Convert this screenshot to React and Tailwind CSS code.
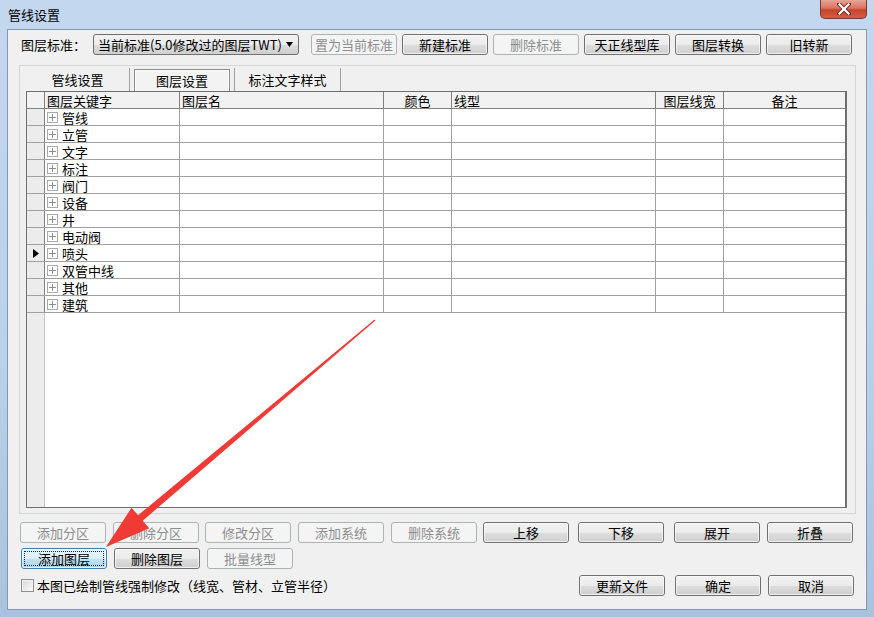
import React from 'react';

function Btn({ children, kind = 'normal', className = '' }) {
  let cls;
  if (kind === 'disabled') cls = 'border-[#adb2b5] bg-[#f4f4f4] text-[#8d8d8d]';
  else if (kind === 'focus') cls = 'border-[#3c7fb1] bg-[linear-gradient(to_bottom,#e8f5fc_0%,#dbeffa_50%,#c3e2f4_51%,#aed5ec_100%)] text-black';
  else cls = 'border-[#707070] bg-[linear-gradient(to_bottom,#f2f2f2_0%,#ebebeb_50%,#dddddd_51%,#cfcfcf_100%)] text-black';
  return (
    <div className={`relative h-[21px] w-[86px] shrink-0 rounded-[3px] border ${cls} flex items-center justify-center text-[13px] leading-none ${className}`}>
      {kind !== 'disabled' && <div className="pointer-events-none absolute inset-0 rounded-[2px] border border-[#fbfbfb]/70" />}
      {kind === 'focus' && <div className="pointer-events-none absolute inset-[2px] border border-dotted border-[#222]" />}
      <span className="relative">{children}</span>
    </div>
  );
}

function PlusBox() {
  return (
    <div className="relative ml-[2px] h-[11px] w-[11px] shrink-0 border border-[#a9a9a9] bg-white">
      <div className="absolute left-[1px] right-[1px] top-[4px] h-[1px] bg-[#8f8f8f]" />
      <div className="absolute top-[1px] bottom-[1px] left-[4px] w-[1px] bg-[#8f8f8f]" />
    </div>
  );
}

const rows = ['管线', '立管', '文字', '标注', '阀门', '设备', '井', '电动阀', '喷头', '双管中线', '其他', '建筑'];

export default function App() {
  return (
    <div className="relative h-[617px] w-[874px] overflow-hidden bg-[linear-gradient(to_bottom,#c3d8ef_0%,#b9d0ea_60%,#a9c2df_100%)] font-['Noto_Sans_CJK_SC','Noto_Sans',sans-serif] text-[13px] text-black">
      {/* title bar */}
      <div className="relative flex h-[29px] items-center pl-[8px]">
        <span className="text-[13px] leading-none text-black">管线设置</span>
        <div className="absolute right-[7px] top-0 flex h-[19px] w-[47px] items-center justify-center rounded-b-[5px] border border-t-0 border-[#7a3a30] bg-[linear-gradient(to_bottom,#e8a597_0%,#d9735f_45%,#c7432c_55%,#d65b42_100%)]">
          <svg width="14" height="12" viewBox="0 0 14 12">
            <path d="M2 1 L12 11 M12 1 L2 11" stroke="#6b2a22" strokeWidth="4" strokeLinecap="square" />
            <path d="M2.5 1.5 L11.5 10.5 M11.5 1.5 L2.5 10.5" stroke="#ffffff" strokeWidth="2.2" strokeLinecap="square" />
          </svg>
        </div>
      </div>

      {/* client */}
      <div className="ml-[7px] flex h-[581px] w-[860px] flex-col border border-[#8498b0] bg-[#f0f0f0]">
        {/* top row */}
        <div className="mt-[4px] flex h-[21px] items-center">
          <span className="ml-[13px] w-[72px] shrink-0 leading-none">图层标准：</span>
          <div className="relative flex h-[21px] w-[206px] shrink-0 items-center rounded-[3px] border border-[#707070] bg-[linear-gradient(to_bottom,#f2f2f2_0%,#ebebeb_50%,#dddddd_51%,#cfcfcf_100%)] pl-[4px] leading-none">
            <span>当前标准(5.0修改过的图层TWT)</span>
            <svg className="absolute right-[5px] top-[7px]" width="7" height="5" viewBox="0 0 7 5">
              <polygon points="0,0 7,0 3.5,5" fill="#000" />
            </svg>
          </div>
          <Btn kind="disabled" className="ml-[12px]">置为当前标准</Btn>
          <Btn className="ml-[5px]">新建标准</Btn>
          <Btn kind="disabled" className="ml-[5px]">删除标准</Btn>
          <Btn className="ml-[5px]">天正线型库</Btn>
          <Btn className="ml-[5px]">图层转换</Btn>
          <Btn className="ml-[5px]">旧转新</Btn>
        </div>

        {/* tab panel */}
        <div className="ml-[11px] mt-[10px] flex h-[449px] w-[837px] flex-col border border-[#d5d5d5] pl-[6px]">
          <div className="mt-[2px] flex h-[23px] items-stretch">
            <div className="flex w-[104px] items-center justify-center border-r border-[#a0a0a0] leading-none">管线设置</div>
            <div className="ml-[4px] mt-[1px] flex w-[96px] items-center justify-center border border-b-0 border-[#8c8c8c] bg-[#f3f3f3] leading-none shadow-[inset_1px_1px_0_#ffffff,inset_-1px_0_0_#ffffff]">图层设置</div>
            <div className="ml-[4px] flex w-[107px] items-center justify-center border-l border-r border-[#a0a0a0] leading-none">标注文字样式</div>
          </div>

          {/* grid */}
          <div className="flex h-[417px] w-[821px] flex-col border border-r-2 border-[#6e6e6e] bg-white">
            <div className="flex h-[17px] shrink-0 border-b border-[#808080] bg-[#f2f2f2] leading-none">
              <div className="w-[18px] shrink-0 border-r border-[#808080]" />
              <div className="flex w-[135px] shrink-0 items-center border-r border-[#808080] pl-[2px]">图层关键字</div>
              <div className="flex w-[204px] shrink-0 items-center border-r border-[#808080] pl-[2px]">图层名</div>
              <div className="flex w-[68px] shrink-0 items-center justify-center border-r border-[#808080]">颜色</div>
              <div className="flex w-[204px] shrink-0 items-center border-r border-[#808080] pl-[2px]">线型</div>
              <div className="flex w-[68px] shrink-0 items-center justify-center border-r border-[#808080]">图层线宽</div>
              <div className="flex w-[121px] shrink-0 items-center justify-center">备注</div>
            </div>
            {rows.map((name, i) => (
              <div key={name} className="flex h-[17px] shrink-0 border-b border-[#a0a0a0] leading-none">
                <div className="flex w-[18px] shrink-0 items-center justify-center border-r border-[#808080] bg-[#ececec]">
                  {i === 8 && (
                    <svg width="6" height="9" viewBox="0 0 6 9">
                      <polygon points="0,0 6,4.5 0,9" fill="#000" />
                    </svg>
                  )}
                </div>
                <div className="flex w-[135px] shrink-0 items-center border-r border-[#a0a0a0]">
                  <PlusBox />
                  <span className="ml-[4px]">{name}</span>
                </div>
                <div className="w-[204px] shrink-0 border-r border-[#a0a0a0]" />
                <div className="w-[68px] shrink-0 border-r border-[#a0a0a0]" />
                <div className="w-[204px] shrink-0 border-r border-[#a0a0a0]" />
                <div className="w-[68px] shrink-0 border-r border-[#a0a0a0]" />
                <div className="w-[121px] shrink-0" />
              </div>
            ))}
            <div className="flex flex-1">
              <div className="w-[18px] shrink-0 border-r border-[#c8c8c8] bg-[#ececec]" />
              <div className="flex-1 bg-white" />
            </div>
          </div>
        </div>

        {/* button row 1 */}
        <div className="mt-[8px] flex h-[21px]">
          <Btn kind="disabled" className="ml-[12px]">添加分区</Btn>
          <Btn kind="disabled" className="ml-[7px]">删除分区</Btn>
          <Btn kind="disabled" className="ml-[6px]">修改分区</Btn>
          <Btn kind="disabled" className="ml-[7px]">添加系统</Btn>
          <Btn kind="disabled" className="ml-[7px]">删除系统</Btn>
          <Btn className="ml-[6px]">上移</Btn>
          <Btn className="ml-[9px]">下移</Btn>
          <Btn className="ml-[10px]">展开</Btn>
          <Btn className="ml-[7px]">折叠</Btn>
        </div>

        {/* button row 2 */}
        <div className="mt-[5px] flex h-[21px]">
          <Btn kind="focus" className="ml-[13px] w-[85px]">添加图层</Btn>
          <Btn className="ml-[7px] w-[85px]">删除图层</Btn>
          <Btn kind="disabled" className="ml-[7px]">批量线型</Btn>
        </div>

        {/* row 3 */}
        <div className="mt-[6px] flex h-[21px] items-center">
          <div className="ml-[13px] h-[13px] w-[13px] shrink-0 border border-[#8e8f8f] bg-[linear-gradient(135deg,#d8d8d8,#fbfbfb)] shadow-[inset_0_0_0_1px_#f4f4f4]" />
          <span className="ml-[3px] leading-none">本图已绘制管线强制修改（线宽、管材、立管半径）</span>
          <Btn className="ml-auto">更新文件</Btn>
          <Btn className="ml-[10px]">确定</Btn>
          <Btn className="ml-[7px] mr-[12px]">取消</Btn>
        </div>
      </div>

      {/* red arrow annotation */}
      <svg className="pointer-events-none absolute inset-0" width="874" height="617" viewBox="0 0 874 617">
        <polygon
          points="374.6,319.6 138.1,515.3 131.5,507.8 106,547 149.2,528.2 142.7,520.7 375.4,320.4"
          fill="#ef3a35"
        />
      </svg>
    </div>
  );
}
